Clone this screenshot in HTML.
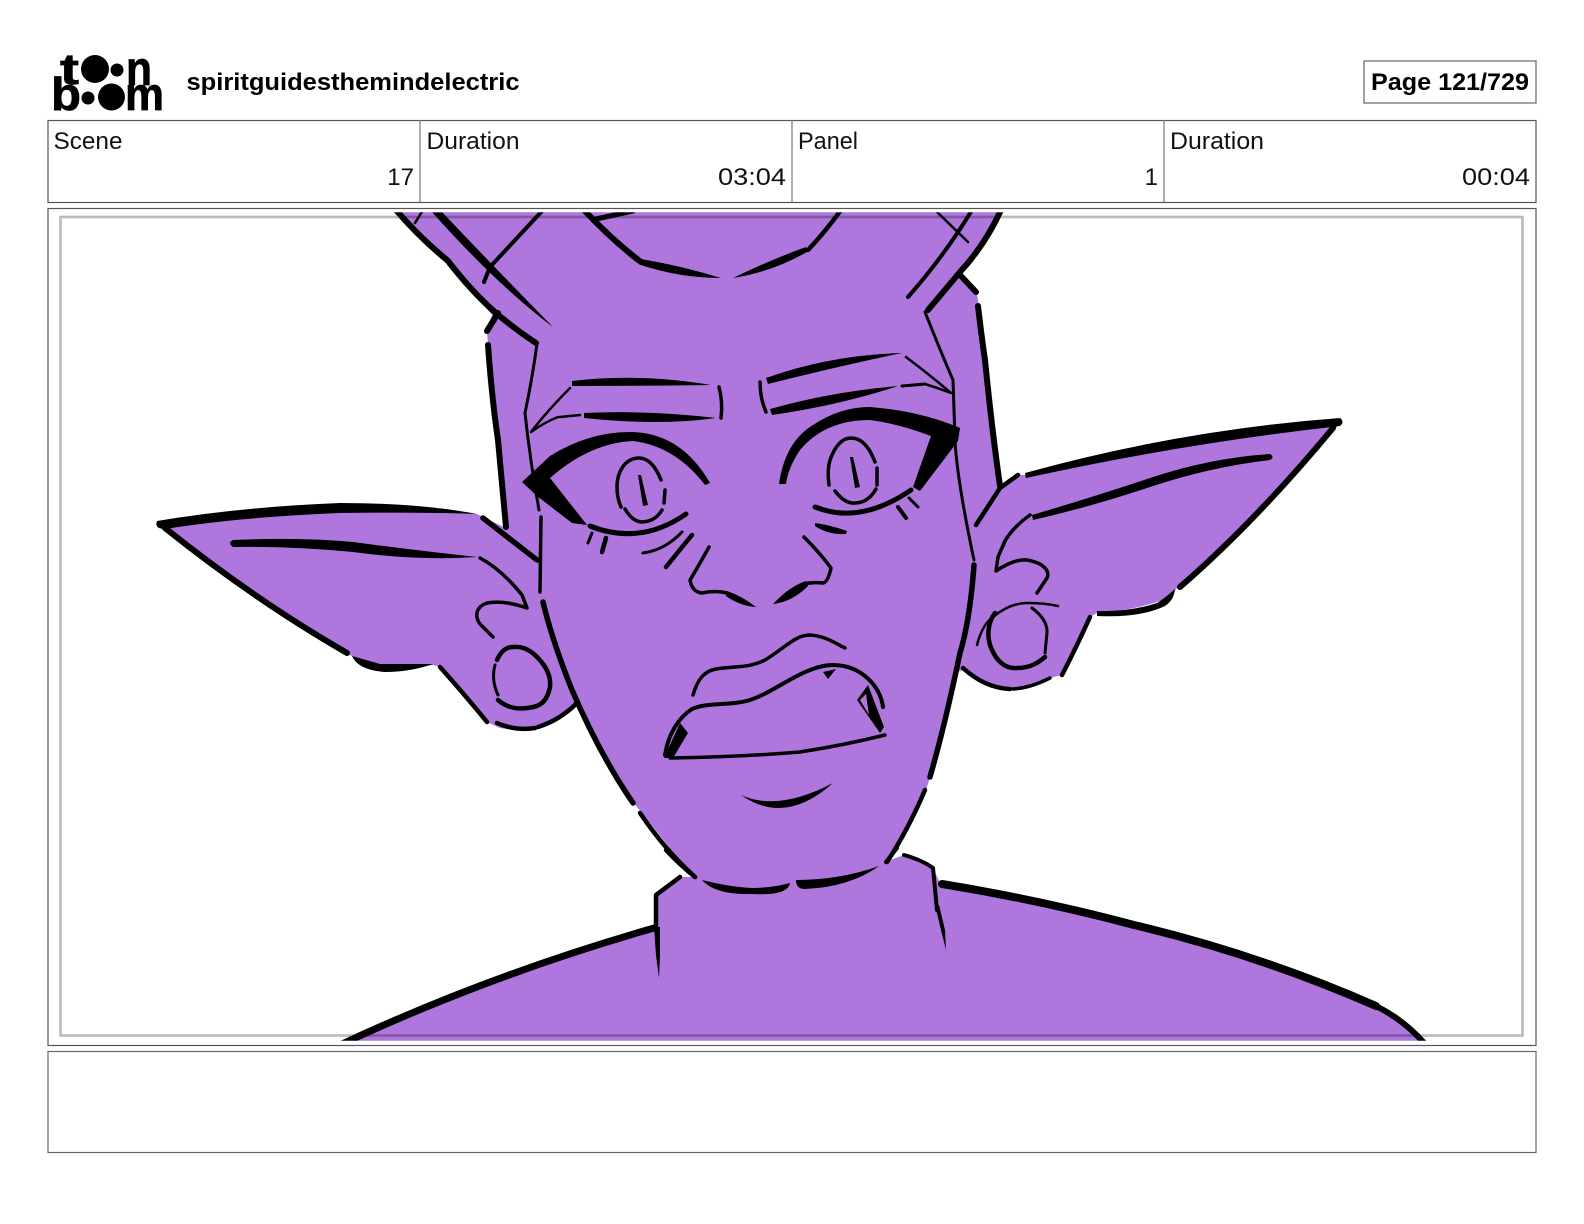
<!DOCTYPE html>
<html lang="en"><head><meta charset="utf-8"><title>spiritguidesthemindelectric</title>
<style>html,body{margin:0;padding:0;background:#fff}svg{display:block}
text{font-family:"Liberation Sans",sans-serif;fill:#111}
.l{font-size:24px}.b{font-size:24px;font-weight:bold;fill:#000}
.g{font-weight:bold;fill:#000;stroke:#000;stroke-width:.7px}</style></head>
<body>
<svg xmlns="http://www.w3.org/2000/svg" width="1584" height="1224" viewBox="0 0 1584 1224">
<rect width="1584" height="1224" fill="#fff"/>
<!-- logo -->
<g>
<text class="g" x="60" y="84" style="font-size:44px" textLength="19" lengthAdjust="spacingAndGlyphs">t</text>
<circle cx="95" cy="69" r="14"/><circle cx="117" cy="70" r="6.500"/>
<text class="g" x="126" y="85" style="font-size:48px" textLength="26" lengthAdjust="spacingAndGlyphs">n</text>
<text class="g" x="51" y="110" style="font-size:46px" textLength="30" lengthAdjust="spacingAndGlyphs">b</text>
<circle cx="88" cy="98" r="6.500"/><circle cx="111.500" cy="97" r="13.500"/>
<text class="g" x="125" y="110" style="font-size:46px" textLength="39" lengthAdjust="spacingAndGlyphs">m</text>
</g>
<text class="b" x="186.500" y="90" textLength="333" lengthAdjust="spacingAndGlyphs">spiritguidesthemindelectric</text>
<rect x="1364" y="61" width="172" height="42" fill="none" stroke="#666" stroke-width="1.200"/>
<text class="b" x="1371" y="90" textLength="158" lengthAdjust="spacingAndGlyphs">Page 121/729</text>
<!-- info table -->
<rect x="48" y="120.500" width="1488" height="82" fill="none" stroke="#555" stroke-width="1.200"/>
<path d="M420,120V202M792,120V202M1164,120V202" stroke="#777" stroke-width="1.200"/>
<text class="l" x="53.500" y="149" textLength="69" lengthAdjust="spacingAndGlyphs">Scene</text>
<text class="l" x="426.500" y="149" textLength="93" lengthAdjust="spacingAndGlyphs">Duration</text>
<text class="l" x="798" y="149" textLength="60" lengthAdjust="spacingAndGlyphs">Panel</text>
<text class="l" x="1170" y="149" textLength="94" lengthAdjust="spacingAndGlyphs">Duration</text>
<text class="l" x="414" y="185" text-anchor="end">17</text>
<text class="l" x="718" y="185" textLength="68" lengthAdjust="spacingAndGlyphs">03:04</text>
<text class="l" x="1158" y="185" text-anchor="end">1</text>
<text class="l" x="1462" y="185" textLength="68" lengthAdjust="spacingAndGlyphs">00:04</text>
<!-- panel frame -->
<rect x="48" y="208.500" width="1488" height="837" fill="none" stroke="#555" stroke-width="1.200"/>
<rect x="48" y="1051.500" width="1488" height="101" fill="none" stroke="#666" stroke-width="1.200"/>
<defs><clipPath id="c"><rect x="50" y="212.300" width="1484" height="828.500"/></clipPath></defs>
<g clip-path="url(#c)">
<path fill="#af76de" d="M398,212 L447,262 L492,315 L487,332 L488,345 L497,440 L506,528 L483,517 L477,514 Q400,505 340,507 Q240,510 157,525 L165,528 Q255,600 350,655 L367,668 Q400,670 433,665 L440,667 L487,722 L500,728 Q520,732 537,728 Q560,720 577,703 L600,747 Q620,785 637,807 L693,877 L680,877 L656,895 L656,927 Q490,975 342,1041 L1423,1041 Q1400,1020 1376,1005 Q1260,950 1134,925 Q1040,900 940,883 L933,868 L904,855 L885,862 Q905,830 927,787 Q945,730 957,672 L963,670 Q985,688 1010,690 Q1035,690 1050,678 L1062,675 L1090,617 L1097,613 Q1140,610 1170,597 L1177,588 Q1255,522 1337,427 L1340,422 Q1180,436 1027,475 L1018,475 L1000,487 L984,350 L978,300 L976,290 L960,275 L1002,212 Z"/>
<!-- constant-ish strokes -->
<g fill="none" stroke="#000" stroke-linecap="round" stroke-linejoin="round">
<g stroke-width="6">
<path d="M396,210 Q420,238 447,260"/>
<path d="M448,261 Q472,292 496,313 Q516,330 536,343"/>
<path d="M498,313 L487,331"/>
<path d="M488,345 Q492,400 498,440 L506,527"/>
<path d="M978,306 Q982,340 985,360 Q992,430 1000,486"/>
<path d="M1001,210 Q985,245 960,272 L928,310"/>
<path d="M961,276 L976,292"/>
<path d="M584,210 Q612,240 641,262"/>
</g>
<g stroke-width="4">
<path d="M596,219 L633,211" stroke-width="5"/>
<path d="M808,250 Q825,232 841,210" stroke-width="4.500"/>
<path d="M543,210 Q515,240 490,267 L484,282" stroke-width="4"/>
<path d="M415,223 L423,210" stroke-width="2.500"/>
<path d="M935,210 L968,242" stroke-width="2.500"/>
<path d="M972,210 Q945,255 908,297" stroke-width="4"/>
<path d="M537,344 Q532,380 525,413 Q530,460 539,510" stroke-width="3"/>
<path d="M541,517 L540,592" stroke-width="3.500"/>
<path d="M543,602 Q552,640 572,690 Q600,755 633,803" stroke-width="5.500"/>
<path d="M640,813 Q665,850 695,877" stroke-width="4.500"/>
<path d="M925,312 Q940,350 953,380 L955,440 Q957,480 974,560" stroke-width="3"/>
<path d="M974,565 Q970,620 960,653 Q945,725 930,777" stroke-width="5.500"/>
<path d="M925,790 Q908,830 887,862" stroke-width="4.500"/>
<!-- brows -->
<path d="M719,387 Q723,402 721,418" stroke-width="3.500"/>
<path d="M560,417 L580,415" stroke-width="2.500"/>
<path d="M570,388 Q548,410 531,432 Q545,422 558,417" stroke-width="2.500"/>
<path d="M760,382 Q760,398 766,412" stroke-width="3.500"/>
<path d="M902,386 L925,384" stroke-width="3"/>
<path d="M906,357 Q930,375 951,393 Q938,388 925,384" stroke-width="2.500"/>
<!-- eyes -->
<path d="M590,526 Q640,546 686,514" stroke-width="5"/>
<path d="M592,533 L588,543" stroke-width="3"/>
<path d="M606,538 L602,552" stroke-width="4.500"/>
<path d="M682,532 Q665,550 643,553" stroke-width="3"/>
<path d="M692,535 Q678,552 666,567" stroke-width="4.500"/>
<path d="M709,547 Q695,572 690,580 Q692,592 702,593 Q715,590 727,593" stroke-width="3.500"/>
<path d="M804,537 Q820,553 831,568 Q828,582 823,583 Q812,582 804,584" stroke-width="3.500"/>
<path d="M815,507 Q860,525 911,490" stroke-width="5"/>
<path d="M898,507 L906,518" stroke-width="4"/>
<path d="M909,498 L918,507" stroke-width="3"/>
<path d="M661,480 C655,465 648,458 639,458 C625,458 617,472 617,487 Q617,498 621,507 M625,509 Q632,521 641,522 Q655,522 662,510 M665,490 L664,503" stroke-width="3.500"/>
<path d="M829,485 Q827,470 830,460 Q838,438 851,438 Q866,438 875,462 M877,468 L877,485 M835,491 Q845,504 855,503 Q868,503 876,489" stroke-width="3.500"/>
<!-- mouth -->
<path d="M693,695 C698,678 705,671 716,669 C735,666 750,668 765,660 C785,648 795,635 810,635 C825,636 835,643 845,648" stroke-width="3.500"/>
<path d="M665,755 C668,735 678,718 692,709 C708,702 730,706 750,700 C775,692 805,665 833,665 C860,665 880,685 883,707" stroke-width="4"/>
<path d="M670,758 Q740,757 800,752 Q845,745 885,735" stroke-width="3.500"/>
<!-- neck -->
<path d="M666,850 Q680,865 695,877" stroke-width="4.500"/>
<path d="M680,877 L656,895 L656,927" stroke-width="4.500"/>
<path d="M904,855 Q922,860 933,868 L937,910" stroke-width="4"/>
<path d="M897,848 L886,862" stroke-width="4"/>
<path d="M342,1044 Q490,975 654,928" stroke-width="7"/>
<path d="M942,884 Q1040,900 1134,925 Q1260,955 1376,1006" stroke-width="8"/>
<path d="M1376,1006 Q1404,1020 1425,1044" stroke-width="6"/>
<!-- left ear -->
<path d="M165,528 Q255,600 347,653" stroke-width="6"/>
<path d="M440,667 Q465,695 487,722" stroke-width="4.500"/>
<path d="M497,723 Q515,731 535,728" stroke-width="4.500"/>
<path d="M538,727 Q560,720 577,703" stroke-width="4.500"/>
<path d="M483,518 L537,560" stroke-width="5.500"/>
<path d="M480,558 C495,566 510,580 522,595 L527,608 C510,602 498,601 487,603 C478,606 473,614 480,624 L493,637" stroke-width="3.500"/>
<path d="M497,660 C501,651 506,647 513,647 C525,646 532,652 537,657 C548,668 551,678 550,687 C547,702 540,707 527,708 C515,710 505,706 498,700" stroke-width="4.500"/>
<path d="M495,665 Q491,680 498,695" stroke-width="3"/>
<!-- right ear -->
<path d="M1018,475 L1000,488 L976,525" stroke-width="4.500"/>
<path d="M1030,515 C1020,522 1010,532 1005,541 L998,557 L996,571 C1008,563 1018,559 1027,560 C1045,563 1050,572 1047,578 L1037,593" stroke-width="3.500"/>
<path d="M1333,428 Q1255,522 1180,587" stroke-width="6"/>
<path d="M1090,617 Q1075,650 1062,675" stroke-width="4.500"/>
<path d="M1050,678 Q1030,688 1013,689" stroke-width="3.500"/>
<path d="M1010,689 Q985,688 963,668" stroke-width="4.500"/>
<path d="M995,613 C988,622 987,635 990,645 C996,662 1006,669 1017,668 C1030,668 1038,663 1045,657" stroke-width="4.500"/>
<path d="M1032,608 Q1048,620 1047,633 L1045,653" stroke-width="3"/>
<path d="M977,645 Q982,625 993,617 Q1010,603 1027,603 Q1045,603 1058,606" stroke-width="2.500"/>
</g>
</g>
<!-- tapered strokes -->
<g fill="#000" clip-path="url(#c)">
<path d="M432,212 L442,212 Q497,270 553,327 Q497,285 432,212Z"/>
<path d="M641,259 Q682,266 721,278 Q680,278 641,265Z"/>
<path d="M733,278 Q770,260 806,247 L807,252 Q772,272 733,278Z"/>
<path d="M572,381 Q640,373 711,385 Q640,386 572,386Z"/>
<path d="M584,413 Q650,410 716,418 Q660,426 584,418Z"/>
<path d="M766,378 Q830,355 902,353 Q840,366 768,384Z"/>
<path d="M770,409 Q830,392 898,386 Q840,405 772,415Z"/>
<path d="M638,475 L641,475 L648,505 L643,506Z"/>
<path d="M850,457 L853,457 L860,487 L855,488Z"/>
<path d="M815,523 Q830,525 847,531 L846,534 Q828,535 815,526Z"/>
<!-- left eye -->
<path d="M522,482 L550,456 Q590,431 633,432 Q682,434 710,483 L705,485 Q675,446 633,441 Q590,443 550,478 L587,525 L572,523 L537,496Z"/>
<!-- right eye -->
<path d="M779,484 Q785,442 813,425 Q840,407 870,407 Q920,411 960,428 L958,441 L920,491 L913,487 L931,436 Q900,424 870,420 Q825,420 800,450 Q788,468 786,484Z"/>
<!-- nose tips -->
<path d="M727,591 Q742,596 756,607 Q740,606 726,596Z"/>
<path d="M806,581 Q790,586 773,604 Q792,602 808,586Z"/>
<!-- teeth -->
<path d="M680,723 L688,733 L673,758 L664,758Z"/>
<path d="M857,700 L868,685 L884,727 L880,733Z M823,672 L836,669 L828,679Z"/>
<path fill="#af76de" d="M860,700 L866,694 L869,715Z"/>
<!-- chin, necklace -->
<path d="M741,795 Q778,812 833,783 Q785,826 741,795Z"/>
<path d="M702,880 Q730,887 752,888 Q772,888 790,883 Q788,896 752,894 Q715,895 702,880Z"/>
<path d="M796,880 Q840,880 879,866 Q850,887 805,889 Q796,889 796,880Z"/>
<path d="M654,927 L660,927 L660,955 L659,978 L656,955Z"/>
<path d="M935,905 L939,905 L945,930 L946,950 L941,930Z"/>
<!-- left ear -->
<path d="M157,521 Q240,507 340,503 Q420,503 477,514 Q420,512 340,513 Q240,517 165,529 Q154,529 157,521Z"/>
<path d="M352,656 Q358,670 385,672 Q410,672 433,664 L380,664Z"/>
<path d="M233,540 Q300,537 353,542 Q420,551 477,557 Q420,561 353,552 Q290,546 233,547 Q227,543 233,540Z"/>
<!-- right ear -->
<path d="M1340,418 Q1180,430 1025,473 L1026,478 Q1180,444 1340,426 Q1345,422 1340,418Z"/>
<path d="M1270,454 Q1210,458 1150,478 Q1090,498 1032,515 L1033,520 Q1090,507 1150,487 Q1210,467 1270,460 Q1275,457 1270,454Z"/>
<path d="M1175,589 Q1165,598 1157,603 Q1130,612 1097,611 L1097,616 Q1140,618 1165,606 Q1174,600 1175,589Z"/>
</g>
<!-- inner safe frame (multiplied over image) -->
<rect x="60.500" y="217" width="1462" height="818.500" fill="none" stroke="#bbb" stroke-width="2.600" style="mix-blend-mode:multiply"/>
</svg>
</body></html>
